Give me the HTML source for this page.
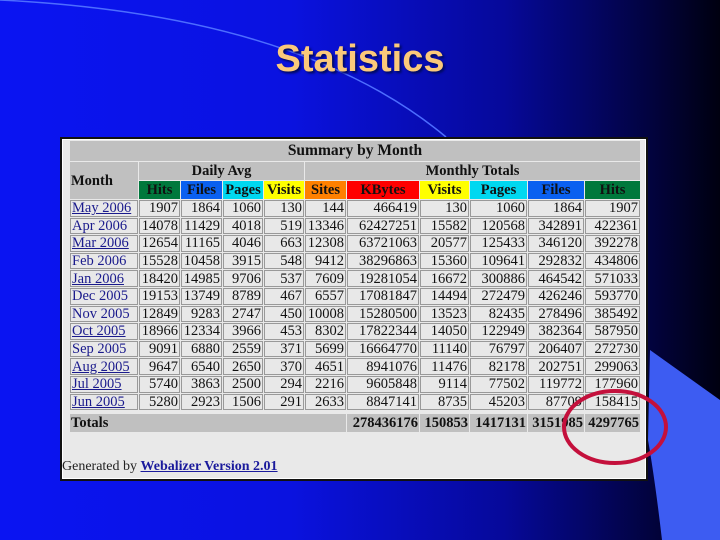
<!DOCTYPE html>
<html><head><meta charset="utf-8"><style>
*{margin:0;padding:0;box-sizing:border-box}
body{width:720px;height:540px;overflow:hidden;position:relative;background:linear-gradient(90deg,#0a14f2 0%,#0a12e0 40%,#06099a 70%,#020340 90%,#000010 100%);font-family:"Liberation Serif",serif}
.t{position:absolute;left:0;width:720px;top:38px;text-align:center;font:bold 38px "Liberation Sans",sans-serif;color:#fbc97a;text-shadow:2px 2px 2px #000a60}
.box{position:absolute;left:60px;top:137px;width:588px;height:344px;background:#e9e9e9;border:2px solid #111;box-shadow:0 0 0 1px #fff inset}
table{position:absolute;left:7px;top:1px;border-collapse:separate;border-spacing:1px;table-layout:fixed;font-size:14.5px}
td{background:#e8e8e8;border:1px solid #999;text-align:right;padding:0 1px;height:16.6px;line-height:14px;white-space:nowrap;color:#111;overflow:hidden}
td.m{text-align:left;color:#1a1a8c}
td.m.u{text-decoration:underline}
.h td{background:#c0c0c0;font-weight:bold;text-align:center;border:none;height:18px}
.c td{font-weight:bold;text-align:center;border:none;height:18px}
.tot td{background:#c0c0c0;font-weight:bold;border:none;height:18px}
.sp td{height:2px;background:transparent;border:none}
.gen{position:absolute;left:0;top:320px;font-size:14px;color:#222}
.gen b{color:#1a1a9c;text-decoration:underline}
</style></head><body>
<svg style="position:absolute;left:0;top:0" width="720" height="540">
<path d="M0 0 Q300 15 446 137" stroke="#4d6dff" stroke-width="1.5" fill="none"/>
<path d="M650 350 L720 400 L720 540 L662 540 Q655 480 648 440 Z" fill="#3d5cf2"/>
</svg>
<div class="t">Statistics</div>
<div class="box">
<table>
<colgroup><col style="width:68px"><col style="width:41px"><col style="width:41px"><col style="width:40px"><col style="width:40px"><col style="width:41px"><col style="width:72px"><col style="width:49px"><col style="width:57px"><col style="width:56px"><col style="width:55px"></colgroup>
<tr class="h"><td colspan="11" style="height:20px;font-size:15.5px">Summary by Month</td></tr>
<tr class="h"><td rowspan="2" style="text-align:left">Month</td><td colspan="4">Daily Avg</td><td colspan="6">Monthly Totals</td></tr>
<tr class="c"><td style="background:#00783c">Hits</td><td style="background:#0a60f0">Files</td><td style="background:#00d8f0">Pages</td><td style="background:#ffff00">Visits</td><td style="background:#ff8000">Sites</td><td style="background:#ff0000">KBytes</td><td style="background:#ffff00">Visits</td><td style="background:#00d8f0">Pages</td><td style="background:#0a60f0">Files</td><td style="background:#00783c">Hits</td></tr>
<tr><td class="m u">May 2006</td><td>1907</td><td>1864</td><td>1060</td><td>130</td><td>144</td><td>466419</td><td>130</td><td>1060</td><td>1864</td><td>1907</td></tr>
<tr><td class="m">Apr 2006</td><td>14078</td><td>11429</td><td>4018</td><td>519</td><td>13346</td><td>62427251</td><td>15582</td><td>120568</td><td>342891</td><td>422361</td></tr>
<tr><td class="m u">Mar 2006</td><td>12654</td><td>11165</td><td>4046</td><td>663</td><td>12308</td><td>63721063</td><td>20577</td><td>125433</td><td>346120</td><td>392278</td></tr>
<tr><td class="m">Feb 2006</td><td>15528</td><td>10458</td><td>3915</td><td>548</td><td>9412</td><td>38296863</td><td>15360</td><td>109641</td><td>292832</td><td>434806</td></tr>
<tr><td class="m u">Jan 2006</td><td>18420</td><td>14985</td><td>9706</td><td>537</td><td>7609</td><td>19281054</td><td>16672</td><td>300886</td><td>464542</td><td>571033</td></tr>
<tr><td class="m">Dec 2005</td><td>19153</td><td>13749</td><td>8789</td><td>467</td><td>6557</td><td>17081847</td><td>14494</td><td>272479</td><td>426246</td><td>593770</td></tr>
<tr><td class="m">Nov 2005</td><td>12849</td><td>9283</td><td>2747</td><td>450</td><td>10008</td><td>15280500</td><td>13523</td><td>82435</td><td>278496</td><td>385492</td></tr>
<tr><td class="m u">Oct 2005</td><td>18966</td><td>12334</td><td>3966</td><td>453</td><td>8302</td><td>17822344</td><td>14050</td><td>122949</td><td>382364</td><td>587950</td></tr>
<tr><td class="m">Sep 2005</td><td>9091</td><td>6880</td><td>2559</td><td>371</td><td>5699</td><td>16664770</td><td>11140</td><td>76797</td><td>206407</td><td>272730</td></tr>
<tr><td class="m u">Aug 2005</td><td>9647</td><td>6540</td><td>2650</td><td>370</td><td>4651</td><td>8941076</td><td>11476</td><td>82178</td><td>202751</td><td>299063</td></tr>
<tr><td class="m u">Jul 2005</td><td>5740</td><td>3863</td><td>2500</td><td>294</td><td>2216</td><td>9605848</td><td>9114</td><td>77502</td><td>119772</td><td>177960</td></tr>
<tr><td class="m u">Jun 2005</td><td>5280</td><td>2923</td><td>1506</td><td>291</td><td>2633</td><td>8847141</td><td>8735</td><td>45203</td><td>87709</td><td>158415</td></tr>
<tr class="sp"><td colspan="11"></td></tr>
<tr class="tot"><td colspan="6" style="text-align:left">Totals</td><td>278436176</td><td>150853</td><td>1417131</td><td>3151985</td><td>4297765</td></tr>
</table>
<div class="gen">Generated by <b>Webalizer Version 2.01</b></div>
</div>
<svg style="position:absolute;left:0;top:0" width="720" height="540">
<ellipse cx="615" cy="427" rx="51" ry="36" stroke="#c4103c" stroke-width="4" fill="none"/>
</svg>
</body></html>
